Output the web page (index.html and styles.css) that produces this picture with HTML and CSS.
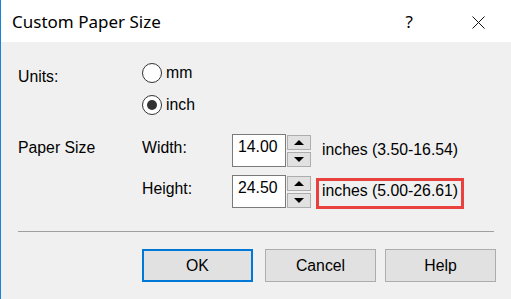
FILE: index.html
```html
<!DOCTYPE html>
<html>
<head>
    <title>Custom Paper Size</title>
    <link rel="stylesheet" href="styles.css">
</head>
<body>
    <div class="window">
        <div class="titlebar">
            <span class="title">Custom Paper Size</span>
            <div class="caption">
                <span class="help-glyph">?</span>
                <svg class="close-glyph" width="13" height="13" viewBox="0 0 13 13">
                    <path d="M0.5 0.5L12.5 12.5M12.5 0.5L0.5 12.5" stroke="#111" stroke-width="1" fill="none" />
                </svg>
            </div>
        </div>
        <div class="content">
            <div class="units">
                <div class="label units-label">Units:</div>
                <div class="radios">
                    <div class="radio"><span class="dot"></span>mm</div>
                    <div class="radio checked"><span class="dot"></span>inch</div>
                </div>
            </div>
            <div class="size-grid">
                <div class="label">Paper Size</div>
                <div class="label">Width:</div>
                <div class="entry">14.00</div>
                <div class="spin"><span class="up"></span><span class="down"></span></div>
                <div class="range">inches (3.50-16.54)</div>

                <div></div>
                <div class="label">Height:</div>
                <div class="entry">24.50</div>
                <div class="spin"><span class="up"></span><span class="down"></span></div>
                <div class="range flagged">inches (5.00-26.61)</div>
            </div>
            <hr class="divider" />
            <div class="actions">
                <button class="btn default">OK</button>
                <button class="btn cancel">Cancel</button>
                <button class="btn">Help</button>
            </div>
        </div>
    </div>
</body>
</html>
```

FILE: styles.css
```css
body {
    margin: 0;
    background: #f0f0f0;
    color: #000;
    font: 15.8px "Liberation Sans", Arial, sans-serif;
}

.window {
    width: 511px;
    height: 299px;
    box-sizing: border-box;
    border-left: 1px solid #1883d7;
    background: #f0f0f0;
    overflow: hidden;
}

.titlebar {
    height: 42px;
    background: #fff;
    display: flex;
    align-items: center;
}

.title {
    padding-left: 11px;
    font: 17px "Noto Sans", sans-serif;
    line-height: 20px;
    padding-top: 1px;
}

.caption {
    margin-left: auto;
    display: flex;
    align-items: center;
    padding-right: 26px;
}

.help-glyph {
    font: 17px "Noto Sans", sans-serif;
    line-height: 20px;
    margin-right: 59px;
    padding-top: 1px;
}

.close-glyph {
    display: block;
    margin-top: 2px;
}

.content {
    padding: 21px 0 0 17px;
}

.label {
    line-height: 20px;
    padding-top: 4px;
}

.units {
    display: flex;
}

.units-label {
    width: 124px;
}

.radios {
    display: flex;
    flex-direction: column;
    gap: 12px;
}

.radio {
    display: flex;
    align-items: center;
    gap: 4px;
    height: 20px;
    line-height: 20px;
}

.dot {
    width: 20px;
    height: 20px;
    box-sizing: border-box;
    border: 1px solid #333;
    border-radius: 50%;
    background: #fff;
    display: grid;
    place-items: center;
}

.radio.checked .dot::after {
    content: "";
    width: 10px;
    height: 10px;
    border-radius: 50%;
    background: #333;
}

.size-grid {
    margin-top: 19px;
    display: grid;
    grid-template-columns: 124px 90px 54px 25px auto;
    row-gap: 7px;
    align-items: start;
}

.entry {
    height: 33px;
    box-sizing: border-box;
    border: 1px solid #7a7a7a;
    background: #fff;
    padding: 2px 5px 0;
    line-height: 20px;
}

.spin {
    margin-left: 1px;
    padding-top: 1px;
    display: flex;
    flex-direction: column;
    gap: 2px;
}

.spin span {
    width: 24px;
    height: 15px;
    box-sizing: border-box;
    border: 1px solid #adadad;
    background: #e1e1e1;
    display: flex;
    align-items: center;
    justify-content: center;
}

.spin span::after {
    content: "";
    border-left: 5px solid transparent;
    border-right: 5px solid transparent;
}

.spin .up::after {
    border-bottom: 5px solid #000;
}

.spin .down::after {
    border-top: 5px solid #000;
}

.range {
    margin: 3px 0 0 5px;
    border: 3px solid transparent;
    padding: 0 3px 5px;
    line-height: 20px;
    justify-self: start;
}

.range.flagged {
    border-color: #e8413e;
}

.divider {
    width: 476px;
    height: 0;
    margin: 22px 0 17px;
    border: 0;
    border-top: 1px solid #a0a0a0;
}

.actions {
    display: flex;
    justify-content: flex-end;
    padding-right: 15px;
}

.btn {
    width: 111px;
    height: 33px;
    box-sizing: border-box;
    border: 1px solid #adadad;
    background: #e1e1e1;
    font: 15.8px "Liberation Sans", Arial, sans-serif;
    line-height: 20px;
    color: #000;
    padding: 0;
}

.btn.default {
    border: 2px solid #0078d7;
    margin-right: 12px;
}

.btn.cancel {
    margin-right: 9px;
}
```
